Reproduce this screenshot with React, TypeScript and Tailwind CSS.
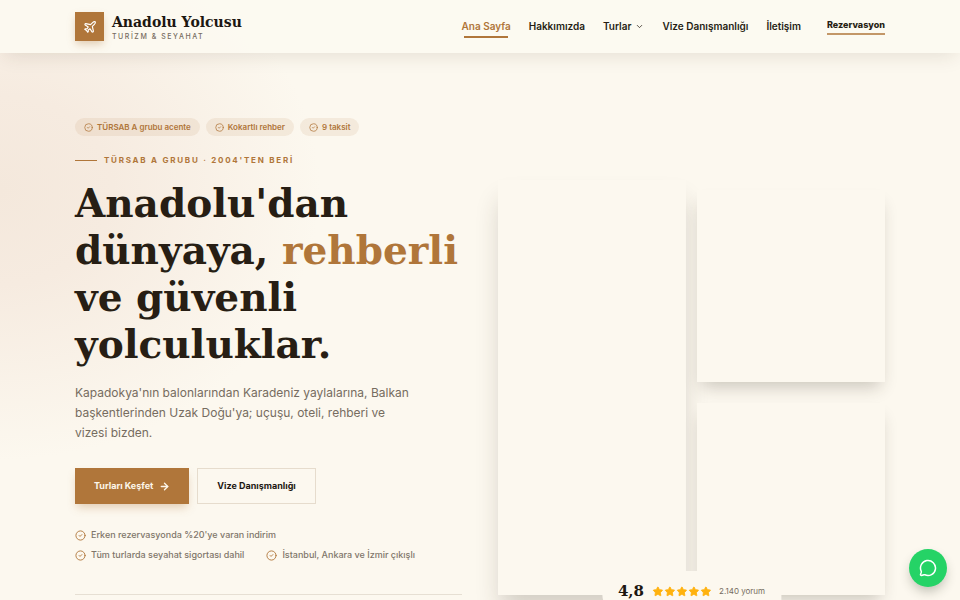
import { ArrowRight, ChevronDown, CircleCheck, MessageCircle, Plane, Star } from 'lucide-react'

const navLinks = [
  { label: 'Ana Sayfa', active: true },
  { label: 'Hakkımızda' },
  { label: 'Turlar', menu: true },
  { label: 'Vize Danışmanlığı' },
  { label: 'İletişim' },
]

const badges = ['TÜRSAB A grubu acente', 'Kokartlı rehber', '9 taksit']

const perks = [
  "Erken rezervasyonda %20'ye varan indirim",
  'Tüm turlarda seyahat sigortası dahil',
  'İstanbul, Ankara ve İzmir çıkışlı',
]

const serif = "font-['DejaVu_Serif',serif] font-bold"

function Header() {
  return (
    <header className="relative z-10 bg-[#fcf9f1]/90 shadow-[0_6px_20px_-4px_rgba(60,45,25,0.13)]">
      <div className="mx-auto flex h-[53px] max-w-[850px] items-center justify-between px-5">
        <a href="#" className="flex items-center gap-2">
          <span className="flex size-[29px] items-center justify-center bg-[#b0763a] text-white shadow-[0_4px_8px_-1px_rgba(176,118,58,0.35)]">
            <Plane size={14} />
          </span>
          <span className="flex flex-col">
            <span className={`${serif} text-sm leading-5 text-[#1c1712]`}>Anadolu Yolcusu</span>
            <span className="text-[7px] leading-[9px] font-medium tracking-[0.22em] text-[#766c60]">
              TURİZM &amp; SEYAHAT
            </span>
          </span>
        </a>

        <nav className="flex items-center gap-[18px] text-[10px] font-semibold text-[#271e14]">
          {navLinks.map((link) => (
            <a
              key={link.label}
              href="#"
              className={link.active ? 'relative text-[#b0763a]' : 'flex items-center gap-1'}
            >
              {link.label}
              {link.menu && <ChevronDown size={9} />}
              {link.active && <span className="absolute inset-x-[3px] -bottom-1 h-[2px] bg-[#b0763a]" />}
            </a>
          ))}
          <a href="#" className="ml-2 border-b-2 border-[#b0763a]/75 pb-px text-[9px] leading-[14px] font-extrabold">
            Rezervasyon
          </a>
        </nav>
      </div>
    </header>
  )
}

function Gallery() {
  return (
    <div className="relative mt-[62px] grid h-[415px] grid-cols-2 gap-[11px]">
      <div className="bg-[#fcf8ef] shadow-[0_18px_24px_-3px_rgba(50,40,30,0.2)]" />
      <div className="grid grid-rows-2 gap-[21px] pt-[10px]">
        <div className="bg-[#fcf8ef] shadow-[0_10px_16px_-5px_rgba(50,40,30,0.24)]" />
        <div className="bg-[#fcf8ef] shadow-[0_10px_16px_-5px_rgba(50,40,30,0.24)]" />
      </div>
      <div className="absolute -bottom-4 left-1/2 flex h-10 -translate-x-1/2 items-center gap-2 rounded-bl-2xl bg-[#fcf8ef] px-4 whitespace-nowrap">
        <span className={`${serif} text-[15px] text-[#1c1712]`}>4,8</span>
        <span className="flex gap-px text-[#ffb20f]">
          {[1, 2, 3, 4, 5].map((n) => (
            <Star key={n} size={11} fill="currentColor" />
          ))}
        </span>
        <span className="text-[8px] text-[#766c60]">2.140 yorum</span>
      </div>
    </div>
  )
}

export default function App() {
  return (
    <div className="relative h-screen overflow-hidden bg-[#fcf8ef] bg-[radial-gradient(ellipse_320px_270px_at_0px_190px,#f4e8dc_0%,#f6ebe0_35%,#fcf8ef_100%)] font-['Inter',sans-serif]">
      <Header />

      <main className="mx-auto grid max-w-[850px] grid-cols-2 items-start gap-9 px-5 pt-[65px]">
        <section>
          <ul className="flex gap-[6px]">
            {badges.map((badge) => (
              <li
                key={badge}
                className="flex h-[18px] items-center gap-1 rounded-full bg-[#b0763a]/10 px-[9px] text-[8px] font-semibold whitespace-nowrap text-[#b0763a]"
              >
                <CircleCheck size={9} />
                {badge}
              </li>
            ))}
          </ul>

          <p className="mt-[18px] flex items-center gap-[7px] text-[8px] leading-3 font-bold tracking-[0.22em] text-[#b0763a]">
            <span className="h-px w-[22px] bg-[#b0763a]" />
            TÜRSAB A GRUBU · 2004'TEN BERİ
          </p>

          <h1 className={`${serif} mt-[14px] text-[39px] leading-[47px] text-[#271e14]`}>
            Anadolu'dan dünyaya, <span className="text-[#b0763a]">rehberli</span> ve güvenli yolculuklar.
          </h1>

          <p className="mt-[15px] max-w-[340px] text-xs leading-5 text-[#766c60]">
            Kapadokya'nın balonlarından Karadeniz yaylalarına, Balkan başkentlerinden Uzak Doğu'ya; uçuşu, oteli,
            rehberi ve vizesi bizden.
          </p>

          <div className="mt-[25px] flex gap-2 text-[9px] font-bold">
            <button className="flex h-9 items-center gap-[6px] bg-[#b0763a] px-[19px] text-[#fdf6ea] shadow-[0_5px_10px_-2px_rgba(176,118,58,0.35)]">
              Turları Keşfet
              <ArrowRight size={11} strokeWidth={3} />
            </button>
            <button className="h-9 border border-[#e6dccd] px-[19px] text-[#1c1712]">Vize Danışmanlığı</button>
          </div>

          <ul className="mt-[23px] flex flex-wrap gap-x-[22px] gap-y-1 border-b border-[#e6dfd3] pb-[31px] text-[9px] leading-4 font-medium text-[#80766a]">
            {perks.map((perk) => (
              <li key={perk} className="flex items-center gap-[5px]">
                <CircleCheck size={11} className="text-[#b0763a]" />
                {perk}
              </li>
            ))}
          </ul>
        </section>

        <Gallery />
      </main>

      <a
        href="#"
        aria-label="WhatsApp"
        className="fixed right-[13px] bottom-[13px] flex size-[38px] items-center justify-center rounded-full bg-[#25d366] text-white shadow-[0_6px_12px_-2px_rgba(40,50,30,0.3)]"
      >
        <MessageCircle size={18} />
      </a>
    </div>
  )
}
